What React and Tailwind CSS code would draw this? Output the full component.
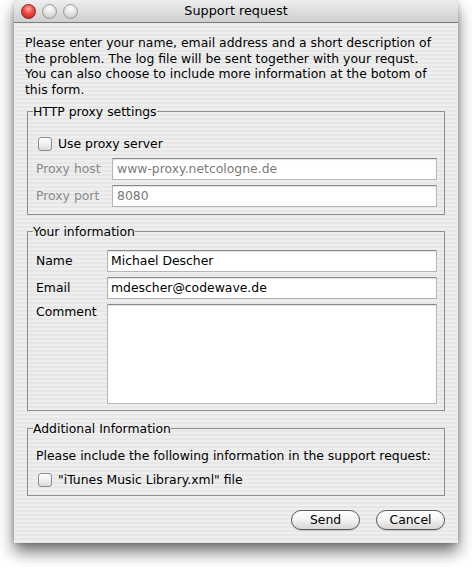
import React from "react";

const font = { fontFamily: '"DejaVu Sans", "Lucida Grande", sans-serif' };

function Checkbox() {
  return (
    <span className="inline-block w-[14px] h-[14px] rounded-[3px] border border-[#8c8c8c] bg-gradient-to-b from-[#ffffff] via-[#f0f0f0] to-[#dcdcdc] shadow-[inset_0_1px_1px_rgba(255,255,255,0.9)] shrink-0" />
  );
}

function Field({ value, disabled, className = "" }) {
  return (
    <div
      className={
        "h-[22px] flex items-center border border-[#b5b5b5] border-t-[#8a8a8a] bg-white shadow-[inset_0_1px_1px_rgba(0,0,0,0.12)] text-[12.4px] " +
        (disabled ? "text-[#7a7a7a] pl-[4px] " : "text-black pl-[3px] ") +
        className
      }
    >
      {value}
    </div>
  );
}

function Light({ red }) {
  return red ? (
    <span className="inline-block w-[15px] h-[15px] rounded-full border border-[#8a2020] bg-[radial-gradient(circle_at_50%_30%,#ffb0a8_0%,#f05048_40%,#b81810_100%)]" />
  ) : (
    <span className="inline-block w-[15px] h-[15px] rounded-full border border-[#9a9a9a] bg-[radial-gradient(circle_at_50%_30%,#ffffff_0%,#e4e4e4_45%,#bcbcbc_100%)]" />
  );
}

function PillButton({ children }) {
  return (
    <div className="w-[69px] h-[20px] rounded-full border border-[#5a5a5a] bg-gradient-to-b from-[#ffffff] via-[#f2f2f2] to-[#d6d6d6] shadow-[0_1px_1px_rgba(0,0,0,0.15)] flex items-center justify-center text-[12.4px] text-black">
      {children}
    </div>
  );
}

export default function App() {
  return (
    <div className="w-[472px] h-[567px] bg-white relative overflow-hidden" style={font}>
      <div className="absolute left-[14px] top-0 w-[444px] h-[543px] rounded-t-[6px] shadow-[0_9px_16px_rgba(0,0,0,0.55),0_0_4px_rgba(0,0,0,0.25)] overflow-hidden flex flex-col bg-[repeating-linear-gradient(180deg,#eeeeee_0px,#eeeeee_2px,#e7e7e7_2px,#e7e7e7_4px)]">
        {/* Title bar */}
        <div className="h-[23px] shrink-0 relative flex items-center border-b border-[#7c7c7c] bg-gradient-to-b from-[#eeeeee] to-[#cfcfcf]">
          <div className="flex items-center gap-[6px] pl-[7px] pt-[1px]">
            <Light red />
            <Light />
            <Light />
          </div>
          <div className="absolute inset-0 flex items-center justify-center text-[12.8px] text-black">
            Support request
          </div>
        </div>

        {/* Body */}
        <div className="flex flex-col pl-[11px] pr-[13px] pt-[12px]">
          <p className="text-[12.4px] leading-[15.7px] text-black whitespace-nowrap">
            Please enter your name, email address and a short description of
            <br />
            the problem. The log file will be sent together with your requst.
            <br />
            You can also choose to include more information at the botom of
            <br />
            this form.
          </p>

          {/* HTTP proxy */}
          <fieldset className="ml-[2px] mt-[6px] border border-[#8e8e8e] pl-[8px] pr-[7px] pb-[7px]">
            <legend className="-ml-[3px] text-[12.4px] leading-[16px] text-black">HTTP proxy settings</legend>
            <div className="flex items-center gap-[6px] mt-[17px] ml-[2px] h-[14px]">
              <Checkbox />
              <span className="text-[12.4px]">Use proxy server</span>
            </div>
            <div className="mt-[7px] flex items-center">
              <span className="w-[76px] text-[12.4px] text-[#8a8a8a]">Proxy host</span>
              <Field value="www-proxy.netcologne.de" disabled className="flex-1" />
            </div>
            <div className="mt-[5px] flex items-center">
              <span className="w-[76px] text-[12.4px] text-[#8a8a8a]">Proxy port</span>
              <Field value="8080" disabled className="flex-1" />
            </div>
          </fieldset>

          {/* Your information */}
          <fieldset className="ml-[2px] mt-[9px] border border-[#8e8e8e] pl-[8px] pr-[7px] pb-[6px]">
            <legend className="-ml-[3px] text-[12.4px] leading-[16px] text-black">Your information</legend>
            <div className="mt-[10px] flex items-center">
              <span className="w-[71px] text-[12.4px]">Name</span>
              <Field value="Michael Descher" className="flex-1" />
            </div>
            <div className="mt-[5px] flex items-center">
              <span className="w-[71px] text-[12.4px]">Email</span>
              <Field value="mdescher@codewave.de" className="flex-1" />
            </div>
            <div className="mt-[5px] flex items-start">
              <span className="w-[71px] text-[12.4px] leading-[16px]">Comment</span>
              <div className="flex-1 h-[100px] border border-[#b5b5b5] border-t-[#8a8a8a] bg-white shadow-[inset_0_1px_1px_rgba(0,0,0,0.12)]" />
            </div>
          </fieldset>

          {/* Additional */}
          <fieldset className="ml-[2px] mt-[10px] border border-[#8e8e8e] pl-[8px] pr-[7px] pb-[8px]">
            <legend className="-ml-[3px] text-[12.4px] leading-[16px] text-black">Additional Information</legend>
            <div className="mt-[11px] text-[12.4px] leading-[16px]">
              Please include the following information in the support request:
            </div>
            <div className="flex items-center gap-[6px] mt-[9px] ml-[2px] h-[14px]">
              <Checkbox />
              <span className="text-[12.4px]">"iTunes Music Library.xml" file</span>
            </div>
          </fieldset>

          {/* Buttons */}
          <div className="flex justify-end gap-[16px] mt-[14px]">
            <PillButton>Send</PillButton>
            <PillButton>Cancel</PillButton>
          </div>
        </div>
      </div>
    </div>
  );
}
